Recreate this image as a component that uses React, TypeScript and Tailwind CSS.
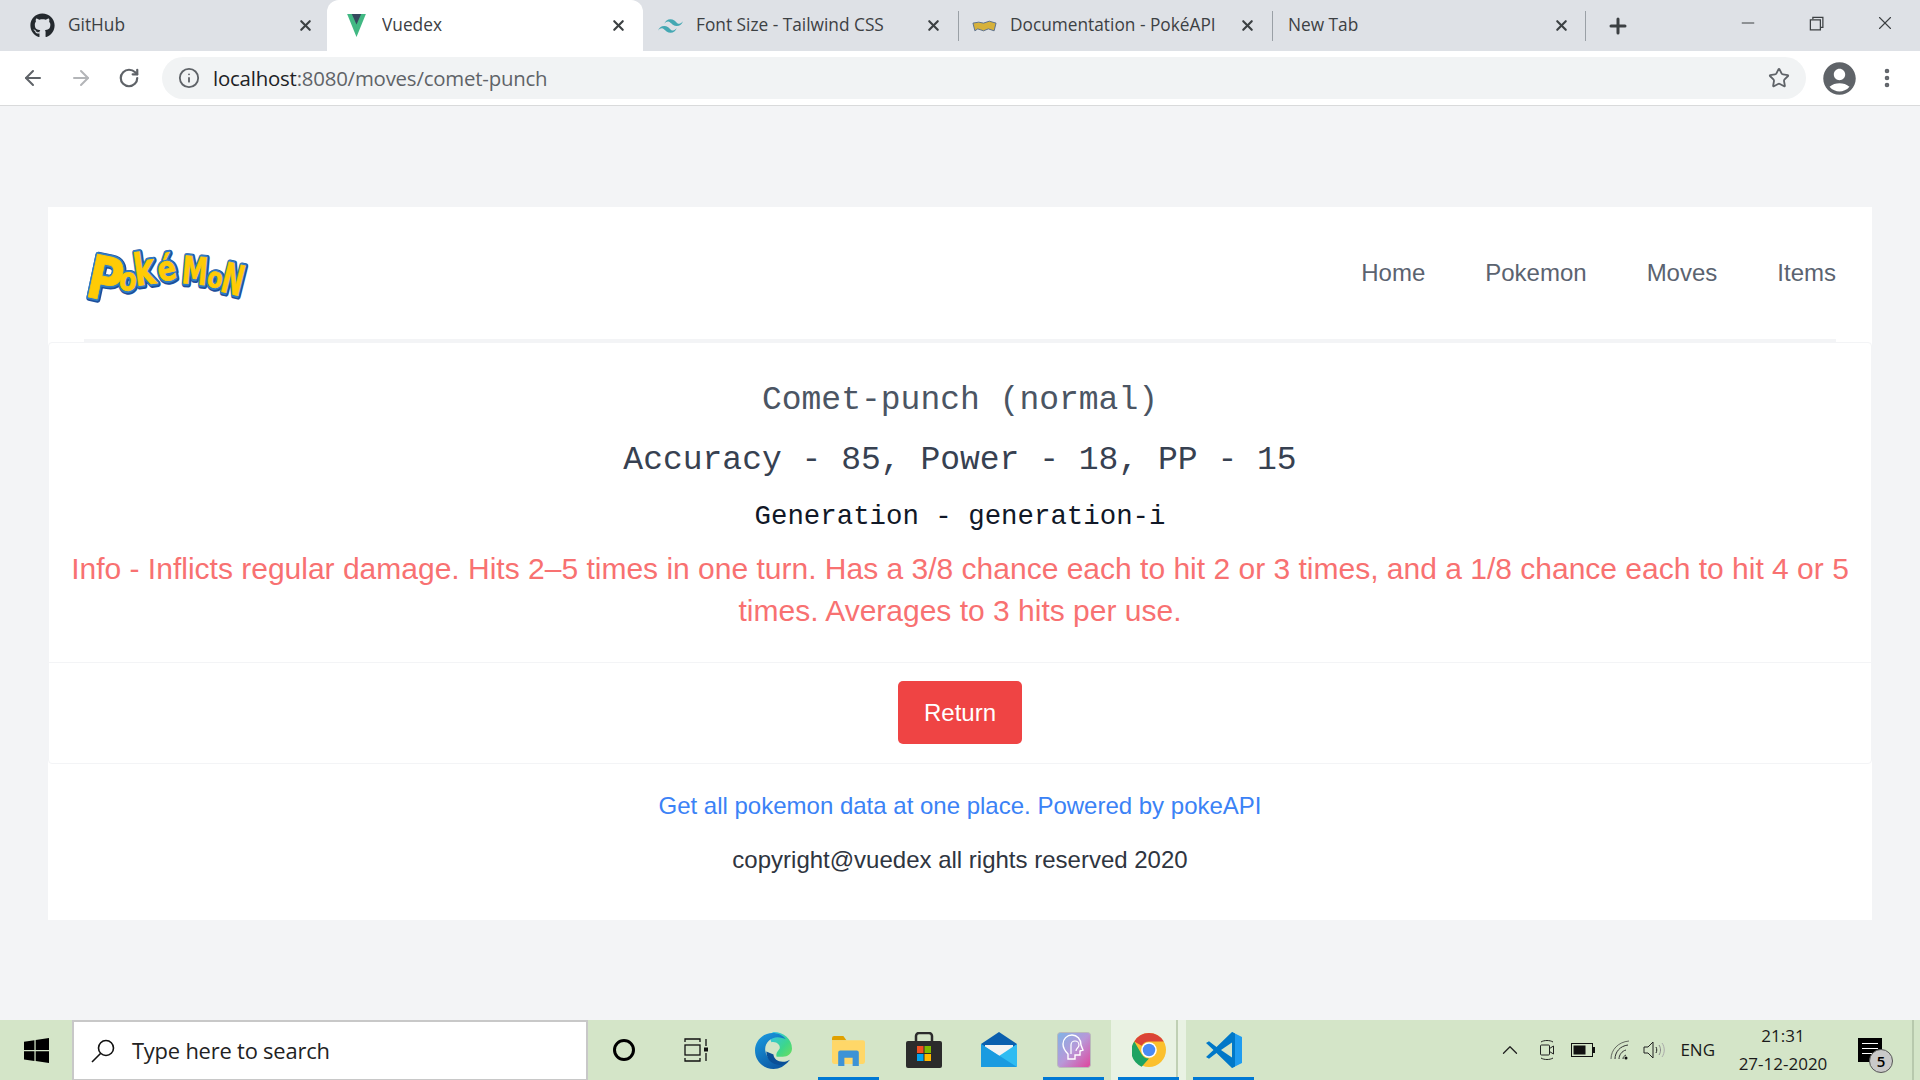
import React from "react";
import { ArrowLeft, ArrowRight, RotateCw, Info, Star, X, Plus, Minus, MoreVertical, ChevronUp } from "lucide-react";
import { FaGithub } from "react-icons/fa";
import { MdAccountCircle } from "react-icons/md";
import { VscChromeRestore } from "react-icons/vsc";

function VueIcon() {
  return (
    <svg viewBox="0 0 24 24" className="w-[25px] h-[25px]">
      <path d="M3 1h18L12 23z" fill="#41b883" />
      <path d="M7.500 1h9L12 11z" fill="#35495e" />
    </svg>
  );
}
function TailwindIcon() {
  return (
    <svg viewBox="0 0 24 24" className="w-[25px] h-[25px]" fill="#44a8b3">
      <path d="M12 6c-3 0-5 1.500-6 4.500 1.500-2 3-2.700 4.500-2.200.9.200 1.500.900 2.200 1.600 1.100 1.200 2.400 2.600 5.300 2.600 3 0 5-1.500 6-4.500-1.500 2-3 2.700-4.500 2.200-.9-.200-1.500-.900-2.200-1.600C16.200 7.400 14.900 6 12 6zM6 12.500c-3 0-5 1.500-6 4.500 1.500-2 3-2.700 4.500-2.200.9.200 1.500.900 2.200 1.600C7.800 17.600 9.100 19 12 19c3 0 5-1.500 6-4.500-1.500 2-3 2.700-4.500 2.200-.9-.200-1.500-.900-2.200-1.600-1.100-1.200-2.400-2.600-5.300-2.600z" />
    </svg>
  );
}
function PokeMini() {
  return (
    <svg viewBox="0 0 26 12" className="w-[25px] h-[12px]">
      <path d="M1 3l6-1 5 1 6-2 7 2-2 8-6-2-5 2-6-2-3 2z" fill="#d6b13a" stroke="#5a6f8f" strokeWidth="1" />
    </svg>
  );
}

const tabs = [
  { title: "GitHub", icon: <FaGithub className="w-[25px] h-[25px] text-[#24292e]" /> },
  { title: "Vuedex", icon: <VueIcon />, active: true },
  { title: "Font Size - Tailwind CSS", icon: <TailwindIcon /> },
  { title: "Documentation - PokéAPI", icon: <PokeMini />, sep: true },
  { title: "New Tab", sep: true, last: true },
];

function Tab({ t }: { t: any }) {
  return (
    <div
      className={
        "relative h-[51px] flex items-center pr-[16px] shrink-0 " +
        (t.active
          ? "bg-white rounded-t-[12px] w-[316px] -ml-[3px] mr-[1px] pl-[17px] "
          : "w-[314px] pl-[14px] ")
      }
    >
      {t.sep && <span className="absolute left-0 top-[11px] h-[30px] w-px bg-[#9aa0a6]" />}
      {t.last && <span className="absolute right-0 top-[11px] h-[30px] w-px bg-[#9aa0a6]" />}
      {t.icon && <span className="w-[25px] flex justify-center mr-[13px] shrink-0">{t.icon}</span>}
      <span className={"flex-1 pb-[2px] text-[17.300px] text-[#3c4043] whitespace-nowrap overflow-hidden font-['Open_Sans',sans-serif] " + (t.icon ? "" : "pl-[2px]")}>
        {t.title}
      </span>
      <X className="w-[17px] h-[17px] text-[#3c4043]" strokeWidth={3} />
    </div>
  );
}

function ChromeBar() {
  return (
    <div className="flex h-[51px] bg-[#dee1e6] items-center">
      <div className="flex pl-[16px] -mr-[1px]">
        {tabs.map((t) => (
          <Tab key={t.title} t={t} />
        ))}
      </div>
      <Plus className="ml-[21px] w-[24px] h-[24px] text-[#3c4043]" strokeWidth={3} />
      <div className="flex-1" />
      <div className="flex items-center gap-[48px] pr-[24px] pb-[5px] text-[#3c4043]">
        <Minus className="w-[20px] h-[20px]" strokeWidth={1.2} />
        <VscChromeRestore className="w-[20px] h-[20px]" />
        <X className="w-[22px] h-[22px]" strokeWidth={1.2} />
      </div>
    </div>
  );
}

function Toolbar() {
  return (
    <div className="flex h-[55px] bg-white items-center border-b border-[#d9dadb] pl-[21px] pr-[21px]">
      <ArrowLeft className="w-[24px] h-[24px] text-[#5f6368]" strokeWidth={2} />
      <ArrowRight className="ml-[24px] w-[24px] h-[24px] text-[#b3b5b8]" strokeWidth={2} />
      <RotateCw className="ml-[25px] w-[22px] h-[22px] text-[#5f6368]" strokeWidth={2.4} />
      <div className="ml-[22px] flex-1 h-[42px] rounded-full bg-[#f1f3f4] flex items-center pl-[16px] pr-[16px] mb-[1px]">
        <Info className="w-[22px] h-[22px] text-[#5f6368]" strokeWidth={2} />
        <span className="ml-[13px] pt-[1px] text-[20.400px] font-['Open_Sans',sans-serif] tracking-[-0.2px] text-[#5f6368]">
          <span className="text-[#202124]">localhost</span>:8080/moves/comet-punch
        </span>
        <div className="flex-1" />
        <Star className="w-[22px] h-[22px] text-[#5f6368]" strokeWidth={2} />
      </div>
      <MdAccountCircle className="ml-[14px] w-[39px] h-[39px] text-[#5f6368]" />
      <MoreVertical className="ml-[16px] w-[24px] h-[24px] text-[#5f6368]" strokeWidth={2.6} />
    </div>
  );
}

const logoLetters: [string, number, number, number, number, number][] = [
  ["P", 4, 60, 60, 12, 0.8],
  ["o", 38, 53, 32, 8, 0.8],
  ["k", 56, 50, 44, -8, 0.72],
  ["é", 80, 46, 34, -12, 0.8],
  ["M", 101, 47, 38, 5, 0.68],
  ["o", 126, 50, 28, 10, 0.8],
  ["N", 139, 55, 42, 14, 0.62],
];

function LogoLayer({ fill, stroke, width, dx }: { fill: string; stroke: string; width: number; dx: number }) {
  return (
    <>
      {logoLetters.map(([c, x, y, s, r, k], i) => (
        <text
          key={i}
          transform={`translate(${x + dx} ${y + dx}) rotate(${r}) scale(${k} 1)`}
          fontFamily="DejaVu Sans"
          fontWeight="700"
          fontSize={s}
          fill={fill}
          stroke={stroke}
          strokeWidth={width}
          strokeLinejoin="round"
        >
          {c}
        </text>
      ))}
    </>
  );
}

function PokemonLogo() {
  return (
    <svg viewBox="0 -4 167 70" className="w-[167px] h-[70px] -ml-[4px] -mt-[12px] overflow-visible">
      <LogoLayer fill="#1d4f9c" stroke="#1d4f9c" width={6.5} dx={0.8} />
      <LogoLayer fill="#2f7cc4" stroke="#2f7cc4" width={4.5} dx={0} />
      <LogoLayer fill="#ffcb05" stroke="#ffcb05" width={0.8} dx={0} />
    </svg>
  );
}

function Page() {
  return (
    <div className="flex-1 bg-[#f3f4f6] px-[48px] pt-[101px] font-['Liberation_Sans',Arial,sans-serif]">
      <div className="bg-white">
        <div className="px-[36px]">
          <nav className="h-[135px] flex items-center justify-between border-b-[3px] border-[#f3f4f6]">
            <PokemonLogo />
            <ul className="flex gap-[60px] text-[24px] text-[#5b6370]">
              <li>Home</li>
              <li>Pokemon</li>
              <li>Moves</li>
              <li>Items</li>
            </ul>
          </nav>
        </div>
        <section className="border border-[#f3f4f6] rounded-[4px] text-center">
          <div className="pt-[31px] pb-[30px] px-[20px] border-b border-[#f3f4f6]">
            <h1 className="font-['Liberation_Mono',monospace] text-[33px] leading-[54px] text-[#4b5563]">
              Comet-punch (normal)
            </h1>
            <h2 className="mt-[6px] font-['Liberation_Mono',monospace] text-[33px] leading-[54px] text-[#374151]">
              Accuracy - 85, Power - 18, PP - 15
            </h2>
            <h3 className="mt-[6px] font-['Liberation_Mono',monospace] text-[27.400px] leading-[46px] text-[#111827]">
              Generation - generation-i
            </h3>
            <p className="mt-[8px] text-[30px] leading-[42px] text-[#f87171]">
              Info - Inflicts regular damage. Hits 2–5 times in one turn. Has a 3/8 chance each to hit 2 or 3 times, and a 1/8 chance each to hit 4 or 5 times. Averages to 3 hits per use.
            </p>
          </div>
          <div className="pt-[18px] pb-[19px] flex justify-center">
            <button className="w-[124px] h-[63px] rounded-[5px] bg-[#ef4444] text-white text-[24px]">Return</button>
          </div>
        </section>
        <footer className="h-[156px] text-center text-[24px] pt-[26px]">
          <p className="text-[#3b82f6] leading-[32px]">Get all pokemon data at one place. Powered by pokeAPI</p>
          <p className="mt-[22px] text-[#2f3540] leading-[32px]">copyright@vuedex all rights reserved 2020</p>
        </footer>
      </div>
    </div>
  );
}

function Slot({ children, line, active }: { children: React.ReactNode; line?: boolean; active?: boolean }) {
  return (
    <div
      className={
        "relative w-[75px] h-[60px] flex items-center justify-center shrink-0 " +
        (active ? "bg-[#e9f2e3] " : "")
      }
    >
      {children}
      {line && <span className="absolute bottom-0 left-[7px] right-[7px] h-[3px] bg-[#0078d4]" />}
    </div>
  );
}

function WindowsLogo() {
  return (
    <svg viewBox="0 0 24 24" className="w-[25px] h-[25px]" fill="#000">
      <path d="M0 3.500l10-1.400v9.400H0zM11.200 2L24 0v11.500H11.200zM0 12.700h10v9.400L0 20.700zM11.200 12.700H24V24l-12.800-2z" />
    </svg>
  );
}
function SearchGlyph() {
  return (
    <svg viewBox="0 0 26 26" className="w-[26px] h-[26px]" fill="none" stroke="#111" strokeWidth="1.600">
      <circle cx="16" cy="10" r="7.500" />
      <path d="M10.500 15.500L2 24" />
    </svg>
  );
}
function TaskView() {
  return (
    <svg viewBox="0 0 26 24" className="w-[26px] h-[24px] -ml-[3px]" fill="none" stroke="#111" strokeWidth="1.300">
      <path d="M1 4V1h15v3M1 20v3h15v-3M22 1v7M22 15v8" />
      <rect x="1" y="7" width="15" height="10" />
      <rect x="20" y="9.500" width="4" height="4" fill="#111" stroke="none" />
    </svg>
  );
}
function EdgeIcon() {
  return (
    <svg viewBox="0 0 36 36" className="w-[37px] h-[37px]">
      <defs>
        <linearGradient id="edgeA" x1="0" y1="0" x2="1" y2="1">
          <stop offset="0" stopColor="#35c1f1" />
          <stop offset="0.6" stopColor="#3dd68c" />
          <stop offset="1" stopColor="#6ede5b" />
        </linearGradient>
        <linearGradient id="edgeB" x1="0" y1="0" x2="0.6" y2="1">
          <stop offset="0" stopColor="#1b9de2" />
          <stop offset="1" stopColor="#0c59a4" />
        </linearGradient>
      </defs>
      <path d="M18 0c10 0 18 7 18 16 0 5-4 8-9 8h-6c-1-4 2-6 3-8 1-3-3-7-8-6-2-5-1-9 2-10z" fill="url(#edgeA)" />
      <path d="M0 18C0 8 8 1 17 1c5 0 10 2 13 6-2-1-5-2-8-2C15 5 9 11 10 18c1 8 8 13 15 13 3 0 5-1 7-2-3 4-8 7-14 7C8 36 0 28 0 18z" fill="url(#edgeB)" />
      <path d="M11 19c0 7 5 13 13 13 5 0 8-2 10-5-2 1-4 2-7 2-5 0-9-3-9-7z" fill="#0a4f97" />
    </svg>
  );
}
function FolderIcon() {
  return (
    <svg viewBox="0 0 32 30" className="w-[33px] h-[31px]">
      <path d="M0 3a2 2 0 012-2h9l3 4H0z" fill="#e0a100" />
      <path d="M0 5h30a2 2 0 012 2v19a2 2 0 01-2 2H2a2 2 0 01-2-2z" fill="#ffd768" />
      <path d="M6 30V17a2 2 0 012-2h16a2 2 0 012 2v13h-6v-8h-8v8z" fill="#3d93d6" />
    </svg>
  );
}
function StoreIcon() {
  return (
    <svg viewBox="0 0 36 36" className="w-[36px] h-[36px]">
      <path d="M10 10V4a3 3 0 013-3h10a3 3 0 013 3v6" fill="none" stroke="#2b2b2b" strokeWidth="2.500" />
      <rect x="0" y="9" width="36" height="27" rx="2" fill="#2b2b2b" />
      <rect x="11" y="14" width="6.500" height="7" fill="#f25022" />
      <rect x="18.500" y="14" width="6.500" height="7" fill="#7fba00" />
      <rect x="11" y="22" width="6.500" height="7" fill="#00a4ef" />
      <rect x="18.500" y="22" width="6.500" height="7" fill="#ffb900" />
    </svg>
  );
}
function MailIcon() {
  return (
    <svg viewBox="0 0 36 36" className="w-[36px] h-[36px]">
      <path d="M0 12L18 0l18 12v6H0z" fill="#0a5fae" />
      <path d="M4 13h28v7L18 27 4 20z" fill="#f3f3f3" />
      <path d="M0 12l18 12 18-12v22a1 1 0 01-1 1H1a1 1 0 01-1-1z" fill="#2fbcf2" />
      <path d="M0 35V12l36 23z" fill="#1a9be0" />
    </svg>
  );
}
function MsiIcon() {
  return (
    <svg viewBox="0 0 34 36" className="w-[34px] h-[36px]">
      <defs>
        <linearGradient id="msi" x1="0" y1="0" x2="1" y2="1">
          <stop offset="0" stopColor="#7fb4e6" />
          <stop offset="0.5" stopColor="#b898d8" />
          <stop offset="1" stopColor="#e0449c" />
        </linearGradient>
      </defs>
      <rect x="0.500" y="0.500" width="33" height="35" rx="3" fill="url(#msi)" stroke="#bbb" />
      <path d="M11 27v-5c-3-3-5-6-5-10 0-5 4-9 9-9s9 4 9 10l2 5-3 1v4h-5v4z" fill="none" stroke="#fff" strokeWidth="1.400" />
      <path d="M14 22v-9a4 4 0 018 0c0 3-3 3-3 6" fill="none" stroke="#fff" strokeWidth="1.200" />
    </svg>
  );
}
function ChromeIcon() {
  return (
    <svg viewBox="0 0 48 48" className="w-[34px] h-[34px]">
      <circle cx="24" cy="24" r="24" fill="#fbc02d" />
      <path d="M24 0a24 24 0 0120.800 12H24a12 12 0 00-10.400 6L3.200 12A24 24 0 0124 0z" fill="#db4437" />
      <path d="M3.200 12l10.400 18A12 12 0 0024 36L13.600 47.600A24 24 0 013.200 12z" fill="#1ea362" />
      <circle cx="24" cy="24" r="11" fill="#fff" />
      <circle cx="24" cy="24" r="8.800" fill="#4a8af4" />
    </svg>
  );
}
function VSCodeIcon() {
  return (
    <svg viewBox="0 0 36 36" className="w-[36px] h-[36px]">
      <path d="M26 0l10 5v26l-10 5z" fill="#1f9cf0" />
      <path d="M26 0L10.500 15 3 9.300 0 11l7.500 7L0 25l3 1.700L10.500 21 26 36l3-1.500V1.500z" fill="#0078c8" />
      <path d="M26 10.500L15 18l11 7.500z" fill="#d4e5c8" />
    </svg>
  );
}
function CamTray() {
  return (
    <svg viewBox="0 0 16 22" className="w-[16px] h-[22px]" fill="none" stroke="#222" strokeWidth="1">
      <path d="M2 3c3-2 9-2 12 0M2 19c3 2 9 2 12 0" />
      <rect x="1.500" y="6" width="9" height="10" rx="1" />
      <path d="M10.500 9.500L14.500 7v8l-4-2.500" />
    </svg>
  );
}
function BatteryTray() {
  return (
    <svg viewBox="0 0 24 14" className="w-[24px] h-[14px]">
      <rect x="0.500" y="0.500" width="21" height="13" fill="none" stroke="#111" />
      <rect x="2.500" y="2.500" width="12" height="9" fill="#111" />
      <rect x="22" y="4" width="2" height="6" fill="#111" />
    </svg>
  );
}
function WifiTray() {
  return (
    <svg viewBox="0 0 20 20" className="w-[20px] h-[20px]" fill="none" stroke="#333" strokeWidth="1">
      <path d="M1 19C1 10 8 2 19 1" opacity="0.7" />
      <path d="M5 19C5 12 10 6 18 5" />
      <path d="M9 19c0-4 3-8 7-9" />
      <path d="M13 19c0-2 1-3 3-4" />
      <circle cx="16" cy="18" r="1.500" fill="#111" stroke="none" />
    </svg>
  );
}
function SpeakerTray() {
  return (
    <svg viewBox="0 0 22 20" className="w-[22px] h-[20px]" fill="none" stroke="#222" strokeWidth="1">
      <path d="M1 7h4l5-5v16l-5-5H1z" />
      <path d="M13 7c1 2 1 4 0 6" />
      <path d="M16 5c2 3 2 7 0 10" stroke="#888" />
      <path d="M19 3c3 4 3 10 0 14" stroke="#aaa" />
    </svg>
  );
}

function Taskbar() {
  return (
    <div className="h-[60px] bg-[#d4e5c8] flex items-center shrink-0 font-['Open_Sans',sans-serif] text-[#1a1a1a]">
      <div className="w-[72px] flex justify-center">
        <WindowsLogo />
      </div>
      <div className="w-[516px] h-[60px] bg-white border-2 border-b-[1px] border-[#c8c8c8] flex items-center pl-[16px]">
        <SearchGlyph />
        <span className="ml-[16px] pt-[2px] text-[21.900px] text-[#222] tracking-[-0.2px]">Type here to search</span>
      </div>
      <div className="-ml-[2px] flex">
        <Slot>
          <span className="w-[22px] h-[22px] rounded-full border-[3px] border-black" />
        </Slot>
        <Slot>
          <TaskView />
        </Slot>
        <Slot>
          <EdgeIcon />
        </Slot>
        <Slot line>
          <FolderIcon />
        </Slot>
        <Slot>
          <StoreIcon />
        </Slot>
        <Slot>
          <MailIcon />
        </Slot>
        <Slot line>
          <MsiIcon />
        </Slot>
        <Slot line active>
          <ChromeIcon />
          <span className="absolute right-[8px] top-0 h-full w-[2px] bg-[#c0d0b4]" />
        </Slot>
        <Slot line>
          <VSCodeIcon />
        </Slot>
      </div>
      <div className="flex-1" />
      <div className="flex items-center">
        <ChevronUp className="w-[26px] h-[26px] text-[#222]" strokeWidth={1.200} />
        <span className="ml-[16px]"><CamTray /></span>
        <span className="ml-[16px]"><BatteryTray /></span>
        <span className="ml-[15px]"><WifiTray /></span>
        <span className="ml-[13px]"><SpeakerTray /></span>
        <span className="ml-[15px] text-[17px]">ENG</span>
        <div className="ml-[20px] w-[96px] text-center text-[17px] leading-[28px]">
          <div>21:31</div>
          <div>27-12-2020</div>
        </div>
        <div className="relative ml-[27px] mr-[30px] w-[24px] h-[24px] bg-black">
          <span className="absolute left-[4px] right-[4px] top-[5px] h-[1px] bg-white" />
          <span className="absolute left-[4px] right-[4px] top-[10px] h-[1px] bg-white" />
          <span className="absolute left-[4px] right-[8px] top-[15px] h-[1px] bg-white" />
          <span className="absolute -right-[11px] top-[11px] w-[24px] h-[24px] rounded-full bg-[#c9c9c9] border border-[#555] flex items-center justify-center text-[15px] font-semibold text-black">5</span>
        </div>
        <span className="h-[60px] w-[2px] bg-[#b8c9ad] mr-[6px]" />
      </div>
    </div>
  );
}

export default function App() {
  return (
    <div className="w-[1920px] h-[1080px] flex flex-col overflow-hidden bg-[#f3f4f6]">
      <ChromeBar />
      <Toolbar />
      <Page />
      <Taskbar />
    </div>
  );
}
